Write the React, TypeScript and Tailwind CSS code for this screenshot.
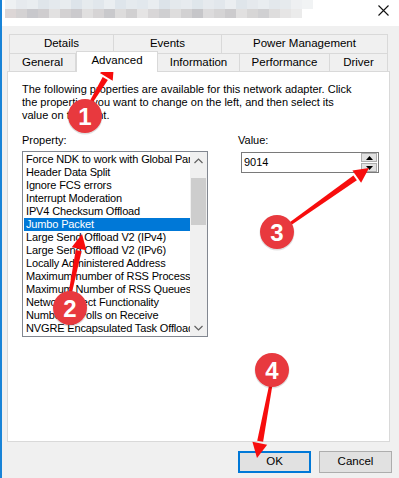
import React from "react";

const blurTop = [
  "#eef1f3", "#e6eaee", "#e9edf0", "#dfe5ea", "#e4e9ed", "#e8ecef", "#dde4ea", "#e6ebee",
  "#e1e7ec", "#eaeef1", "#dee5eb", "#e5eaee", "#e2e8ed", "#e9edf0", "#dce3e9", "#e4e9ed",
  "#e7ebef", "#dfe6eb", "#e6eaee", "#e2e7ec", "#ebeef1", "#dfe5ea", "#e5e9ed", "#e9edf0",
  "#e3e8ec", "#e6eaed", "#eef0f2", "#f1f3f4",
];
const blurBottom = [
  "#dcd6d6", "#d4d2d3", "#c8c8cc", "#cfcdcf", "#e2e1e1", "#d3d1d2", "#cbcacd", "#e0dfdf",
  "#d6d4d5", "#c9c9cc", "#dddcdc", "#d1d0d1", "#e5e4e4", "#d8d6d7", "#cfcfd1", "#dedddd",
  "#d2d1d2", "#c6c6c9", "#dcdbdc", "#d5d4d5", "#cccbcd", "#e1e0e0", "#d7d6d6", "#d0d0d2",
  "#dedddd", "#e6e5e5", "#ebebeb",
];

const properties = [
  "Force NDK to work with Global Parameters",
  "Header Data Split",
  "Ignore FCS errors",
  "Interrupt Moderation",
  "IPV4 Checksum Offload",
  "Jumbo Packet",
  "Large Send Offload V2 (IPv4)",
  "Large Send Offload V2 (IPv6)",
  "Locally Administered Address",
  "Maximum number of RSS Processors",
  "Maximum Number of RSS Queues",
  "Network Direct Functionality",
  "Number of Polls on Receive",
  "NVGRE Encapsulated Task Offload",
];

function Arrow({ x1, y1, x2, y2 }: { x1: number; y1: number; x2: number; y2: number }) {
  const len = Math.hypot(x2 - x1, y2 - y1);
  const ux = (x2 - x1) / len;
  const uy = (y2 - y1) / len;
  const px = -uy;
  const py = ux;
  const head = 17;
  const hw = 7.5;
  const bx = x2 - ux * head;
  const by = y2 - uy * head;
  const shaft = [
    [x1 + px * 1.6, y1 + py * 1.6],
    [bx + px * 3, by + py * 3],
    [bx - px * 3, by - py * 3],
    [x1 - px * 1.6, y1 - py * 1.6],
  ];
  const tip = [
    [x2, y2],
    [bx + px * hw + ux * 2, by + py * hw + uy * 2],
    [bx - px * hw + ux * 2, by - py * hw + uy * 2],
  ];
  const pts = (a: number[][]) => a.map((p) => p.join(",")).join(" ");
  return (
    <g fill="#f70d0d">
      <polygon points={pts(shaft)} />
      <polygon points={pts(tip)} />
    </g>
  );
}

function Badge({ cx, cy, n }: { cx: number; cy: number; n: number }) {
  return (
    <g>
      <circle cx={cx} cy={cy + 1} r={17.5} fill="#000" opacity={0.12} />
      <circle cx={cx} cy={cy} r={17} fill="#e8393e" />
      <text
        x={cx}
        y={cy + 8.5}
        textAnchor="middle"
        fill="#fff"
        fontSize={24}
        fontWeight={700}
        fontFamily="Arial, 'Liberation Sans', sans-serif"
      >
        {n}
      </text>
    </g>
  );
}

function Tab({ label, w, first }: { label: string; w: string; first?: boolean }) {
  return (
    <div
      className={`${w} flex items-center justify-center border-t border-r border-[#d9d9d9] bg-[#f0f0f0] ${
        first ? "border-l" : ""
      }`}
    >
      {label}
    </div>
  );
}

export default function App() {
  return (
    <div className="relative w-[399px] h-[478px] overflow-hidden font-['Liberation_Sans',Arial,sans-serif] text-[11px] text-black">
      <div className="w-full h-full bg-[#f0f0f0] border-l-2 border-[#1883d7]">
        {/* title bar (blurred) */}
        <div className="h-[26px] bg-white flex">
          <div className="pl-[3px] flex flex-col">
            <div className="flex h-[9px]">
              {blurTop.map((c, i) => (
                <div key={i} className="w-[11px] h-full" style={{ backgroundColor: c }} />
              ))}
            </div>
            <div className="flex h-[9px]">
              {blurBottom.map((c, i) => (
                <div key={i} className="w-[11px] h-full" style={{ backgroundColor: c }} />
              ))}
            </div>
          </div>
          <div className="ml-auto mr-[10px] mt-[5px]">
            <svg width="11" height="11" viewBox="0 0 11 11">
              <path d="M0.5 0.5 L10.5 10.5 M10.5 0.5 L0.5 10.5" stroke="#111" strokeWidth="1.1" />
            </svg>
          </div>
        </div>

        <div className="pl-[5px] pt-[8px]">
          {/* tabs */}
          <div className="ml-[2px] w-[379px] leading-none">
            <div className="flex h-[19px] text-[11.5px]">
              <Tab label="Details" w="w-[105px]" first />
              <Tab label="Events" w="w-[108px]" />
              <Tab label="Power Management" w="w-[166px]" />
            </div>
            <div className="flex h-[18px] items-start text-[11.5px]">
              <Tab label="General" w="w-[67px] h-[18px]" first />
              <div className="relative z-10 w-[82px] h-[21px] -mt-[2px] bg-white border-t border-x border-[#d9d9d9] flex justify-center pt-[3px]">
                Advanced
              </div>
              <Tab label="Information" w="w-[82px] h-[18px]" />
              <Tab label="Performance" w="w-[90px] h-[18px]" />
              <Tab label="Driver" w="w-[58px] h-[18px]" />
            </div>
          </div>

          {/* panel */}
          <div className="relative w-[383px] h-[371px] bg-white border border-[#d9d9d9] pl-[14px] pt-[11px] leading-[13px]">
            <p className="w-[340px]">
              The following properties are available for this network adapter. Click the properties you want to
              change on the left, and then select its value on the right.
            </p>
            <div className="flex mt-[12px]">
              <div className="w-[186px]">
                <div>Property:</div>
                <div className="mt-[4px] h-[186px] border border-[#828790] p-[1px] pr-0 flex">
                  <div className="flex-1 overflow-hidden tracking-[-0.15px]">
                    {properties.map((p) => (
                      <div
                        key={p}
                        className={`h-[13px] pl-[2px] whitespace-nowrap ${
                          p === "Jumbo Packet" ? "bg-[#0078d7] text-white" : ""
                        }`}
                      >
                        {p}
                      </div>
                    ))}
                  </div>
                  <div className="w-[17px] -mt-[1px] h-[184px] bg-[#f0f0f0] flex flex-col items-center">
                    <div className="h-[17px] flex items-center justify-center">
                      <svg width="9" height="6" viewBox="0 0 9 6">
                        <path d="M0.5 5 L4.5 1 L8.5 5" fill="none" stroke="#606060" strokeWidth="1.2" />
                      </svg>
                    </div>
                    <div className="mt-[9px] w-[15px] h-[47px] bg-[#cdcdcd]" />
                    <div className="mt-auto h-[17px] flex items-center justify-center">
                      <svg width="9" height="6" viewBox="0 0 9 6">
                        <path d="M0.5 1 L4.5 5 L8.5 1" fill="none" stroke="#606060" strokeWidth="1.2" />
                      </svg>
                    </div>
                  </div>
                </div>
              </div>
              <div className="ml-[30px]">
                <div>Value:</div>
                <div className="ml-[3px] mt-[5px] w-[138px] h-[21px] border border-[#7a7a7a] flex items-center">
                  <span className="pl-[2px]">9014</span>
                  <div className="ml-auto mr-[1px] flex flex-col gap-[1px]">
                    <div className="w-[16px] h-[9px] bg-[#e1e1e1] border border-[#adadad] flex items-center justify-center">
                      <svg width="7" height="4" viewBox="0 0 7 4">
                        <path d="M0 4 L3.5 0 L7 4 Z" fill="#000" />
                      </svg>
                    </div>
                    <div className="w-[16px] h-[9px] bg-[#e1e1e1] border border-[#adadad] flex items-center justify-center">
                      <svg width="7" height="4" viewBox="0 0 7 4">
                        <path d="M0 0 L3.5 4 L7 0 Z" fill="#000" />
                      </svg>
                    </div>
                  </div>
                </div>
              </div>
            </div>
          </div>

          {/* buttons */}
          <div className="flex justify-end gap-[8px] pr-[7px] mt-[9px]">
            <button className="w-[73px] h-[22px] bg-[#e1e1e1] border-2 border-[#0078d7] text-[11.5px]">OK</button>
            <button className="w-[73px] h-[22px] bg-[#e1e1e1] border border-[#adadad] text-[11.5px]">Cancel</button>
          </div>
        </div>
      </div>

      {/* annotations */}
      <svg className="absolute left-0 top-0 pointer-events-none" width="399" height="478" viewBox="0 0 399 478">
        <Arrow x1={90} y1={104} x2={114} y2={64} />
        <Arrow x1={70} y1={294} x2={82} y2={234} />
        <Arrow x1={290} y1={224} x2={369} y2={168} />
        <Arrow x1={271} y1={384} x2={257} y2={458} />
        <Badge cx={85} cy={116} n={1} />
        <Badge cx={70} cy={308} n={2} />
        <Badge cx={277} cy={232} n={3} />
        <Badge cx={272} cy={370} n={4} />
      </svg>
    </div>
  );
}
